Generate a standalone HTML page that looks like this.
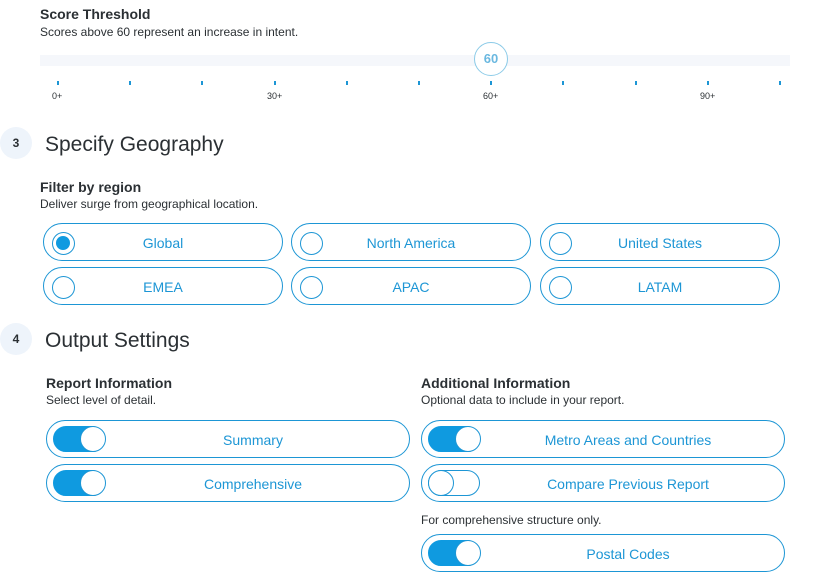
<!DOCTYPE html>
<html><head><style>
*{box-sizing:border-box;margin:0;padding:0}
body{width:818px;height:586px;background:#fff;font-family:"Liberation Sans",sans-serif;color:#2b3034;position:relative;overflow:hidden}
.a{position:absolute}
.h{font-weight:bold;font-size:14px;color:#2b3034}
.d{font-size:12px;color:#2b3034}
.tick{position:absolute;top:81px;width:2px;height:4px;background:#1d96d5}
.lbl{position:absolute;top:91px;font-size:9px}
.step{position:absolute;width:32px;height:32px;border-radius:50%;background:#eef4fb;font-size:12px;font-weight:bold;text-align:center;line-height:32px}
.sh{position:absolute;left:45px;font-size:21px;color:#2b3034}
.rb{position:absolute;width:240px;height:38px;border:1.5px solid #1d96d5;border-radius:19px;color:#1d96d5;font-size:14px;text-align:center;line-height:38px}
.rb i{position:absolute;left:8px;top:8px;width:23px;height:23px;border:1.5px solid #1d96d5;border-radius:50%}
.rb i.on::after{content:"";position:absolute;left:3px;top:3px;width:14px;height:14px;border-radius:50%;background:#0f9ae0}
.tb{position:absolute;width:364px;height:38px;border:1.5px solid #1d96d5;border-radius:19px;color:#1d96d5;font-size:14px;text-align:center;line-height:38px}
.tb span{padding-left:50px}
.sw{position:absolute;left:6px;top:5px;width:52px;height:26px;border-radius:13px;background:#0f9ae0;border:1.5px solid #0f9ae0}
.sw::after{content:"";position:absolute;right:-1.5px;top:-1.5px;width:26px;height:26px;border-radius:50%;background:#fff;border:1.5px solid #1d96d5;box-sizing:border-box}
.sw.off{background:#fff;border-color:#1d96d5}
.sw.off::after{right:auto;left:-1.5px}
</style></head><body>
<div class="a h" style="left:40px;top:6px">Score Threshold</div>
<div class="a d" style="left:40px;top:25px">Scores above 60 represent an increase in intent.</div>
<div class="a" style="left:40px;top:55px;width:750px;height:11px;background:#f5f7fb"></div>
<div class="a" style="left:474px;top:42px;width:34px;height:34px;border-radius:50%;background:#fff;border:1.5px solid #8ccbe8;color:#6ab8e0;font-weight:bold;font-size:13px;text-align:center;line-height:31px">60</div>
<div class="tick" style="left:57px"></div><div class="tick" style="left:129px"></div><div class="tick" style="left:201px"></div><div class="tick" style="left:274px"></div><div class="tick" style="left:346px"></div><div class="tick" style="left:418px"></div><div class="tick" style="left:490px"></div><div class="tick" style="left:562px"></div><div class="tick" style="left:635px"></div><div class="tick" style="left:707px"></div><div class="tick" style="left:779px"></div>
<div class="lbl" style="left:52px">0+</div><div class="lbl" style="left:267px">30+</div><div class="lbl" style="left:483px">60+</div><div class="lbl" style="left:700px">90+</div>

<div class="step" style="left:0;top:127px">3</div>
<div class="sh" style="top:133px">Specify Geography</div>
<div class="a h" style="left:40px;top:179px">Filter by region</div>
<div class="a d" style="left:40px;top:197px">Deliver surge from geographical location.</div>
<div class="rb" style="left:43px;top:223px"><i class="on"></i>Global</div>
<div class="rb" style="left:291px;top:223px"><i></i>North America</div>
<div class="rb" style="left:540px;top:223px"><i></i>United States</div>
<div class="rb" style="left:43px;top:267px"><i></i>EMEA</div>
<div class="rb" style="left:291px;top:267px"><i></i>APAC</div>
<div class="rb" style="left:540px;top:267px"><i></i>LATAM</div>

<div class="step" style="left:0;top:323px">4</div>
<div class="sh" style="top:329px">Output Settings</div>
<div class="a h" style="left:46px;top:375px">Report Information</div>
<div class="a d" style="left:46px;top:393px">Select level of detail.</div>
<div class="a h" style="left:421px;top:375px">Additional Information</div>
<div class="a d" style="left:421px;top:393px">Optional data to include in your report.</div>
<div class="tb" style="left:46px;top:420px"><div class="sw"></div><span>Summary</span></div>
<div class="tb" style="left:46px;top:464px"><div class="sw"></div><span>Comprehensive</span></div>
<div class="tb" style="left:421px;top:420px"><div class="sw"></div><span>Metro Areas and Countries</span></div>
<div class="tb" style="left:421px;top:464px"><div class="sw off"></div><span>Compare Previous Report</span></div>
<div class="a d" style="left:421px;top:513px">For comprehensive structure only.</div>
<div class="tb" style="left:421px;top:534px"><div class="sw"></div><span>Postal Codes</span></div>
</body></html>
